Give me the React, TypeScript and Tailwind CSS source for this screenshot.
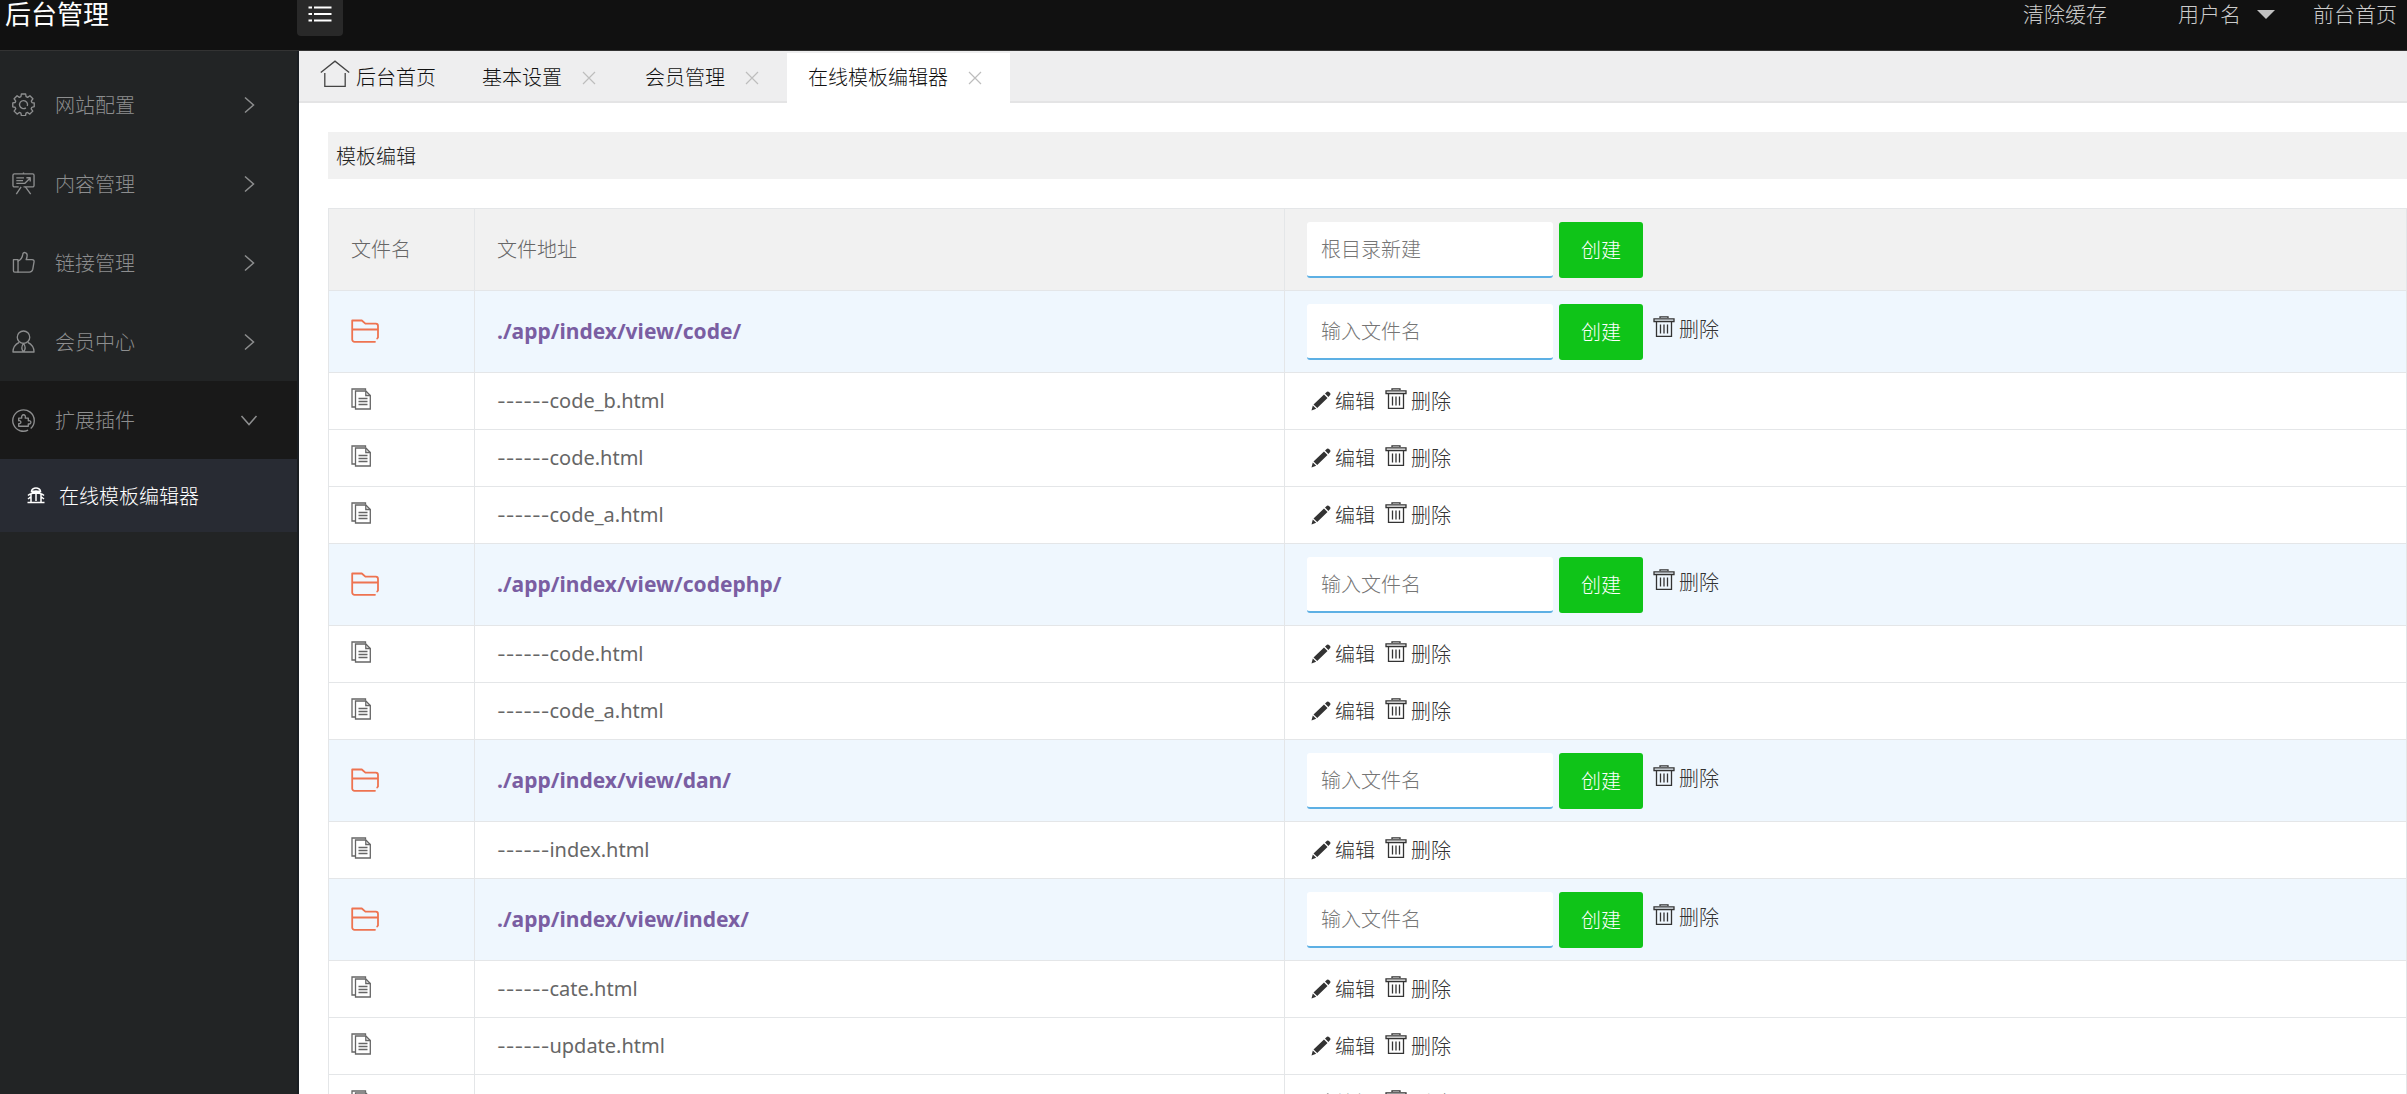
import React from "react";

type IconProps = { className?: string };

type Entry = { name: string; dir?: boolean };

const menus = [
    { title: "网站配置", icon: GearIcon },
    { title: "内容管理", icon: BoardIcon },
    { title: "链接管理", icon: ThumbIcon },
    { title: "会员中心", icon: UserIcon },
];

const tabs = ["基本设置", "会员管理", "在线模板编辑器"];

const entries: Entry[] = [
    { name: "./app/index/view/code/", dir: true },
    { name: "code_b.html" },
    { name: "code.html" },
    { name: "code_a.html" },
    { name: "./app/index/view/codephp/", dir: true },
    { name: "code.html" },
    { name: "code_a.html" },
    { name: "./app/index/view/dan/", dir: true },
    { name: "index.html" },
    { name: "./app/index/view/index/", dir: true },
    { name: "cate.html" },
    { name: "update.html" },
    { name: "index.html" },
];

function GearIcon({ className }: IconProps) {
    return (
        <svg className={className} viewBox="0 0 24 24" fill="none" stroke="currentColor" strokeWidth="1.4" strokeLinejoin="round">
            <path d="M9.8 1h4.4l.5 2.9 1.6.7 2.4-1.7 3.1 3.1-1.7 2.4.7 1.6 2.4.4v3.9l-2.5.6-.7 1.6 1.7 2.4-3.1 3.1-2.4-1.7-1.6.7-.5 2.6H9.8L9.3 21l-1.6-.7L5.3 22l-3.1-3.1 1.7-2.4-.7-1.6-2.4-.5v-4l2.5-.5.6-1.5L2.2 6l3.1-3.1 2.4 1.7 1.6-.7z" />
            <path d="M14.5 15.5a4.200 4.200 0 1 1 1.500-2" />
        </svg>
    );
}

function BoardIcon({ className }: IconProps) {
    return (
        <svg className={className} viewBox="0 0 24 24" fill="none" stroke="currentColor" strokeWidth="1.4" strokeLinejoin="round">
            <path d="M7 15.5H2.5A1.5 1.5 0 0 1 1 14V3.500A1.500 1.500 0 0 1 2.500 2h19A1.500 1.500 0 0 1 23 3.500V14a1.500 1.500 0 0 1-1.500 1.500H12M8 2h8M12 .5V2" />
            <path d="M4.500 6.200h8M4.500 9h7M4.500 11.800h9l5-5M15 6h4v4M9.500 15.500 4.500 23M14 15.500l5.500 7.500" />
        </svg>
    );
}

function ThumbIcon({ className }: IconProps) {
    return (
        <svg className={className} viewBox="0 0 24 24" fill="none" stroke="currentColor" strokeWidth="1.4" strokeLinejoin="round" strokeLinecap="round">
            <path d="M1.500 9h4.800v13H2.800a1.300 1.300 0 0 1-1.300-1.300z" />
            <path d="M6.300 10.500c3.200-1.200 4.500-3.500 5-7.200.2-2.600 4.500-2.300 4.500 1.200 0 1.800-.4 3.200-1 4.500h6.200c1.500 0 2.200 1 2 2.300L21.700 19c-.4 2-1.600 3-3.500 3H6.300" />
        </svg>
    );
}

function UserIcon({ className }: IconProps) {
    return (
        <svg className={className} viewBox="0 0 24 24" fill="none" stroke="currentColor" strokeWidth="1.4" strokeLinejoin="round">
            <circle cx="12" cy="7.500" r="6.500" />
            <path d="M7.500 13C3.500 15 1 18.500 1 23h22c0-4.500-2.500-8-6.500-10M12 14c-2.500 3.500-2.500 6 0 9 2.500-3 2.500-5.500 0-9z" />
        </svg>
    );
}

function PluginIcon({ className }: IconProps) {
    return (
        <svg className={className} viewBox="0 0 24 24" fill="none" stroke="currentColor" strokeWidth="1.4" strokeLinejoin="round">
            <path d="M19.500 20.400A11.200 11.200 0 1 0 8.500 22.700c2.800.8 5.800.6 8.300-.7" />
            <path d="M7 9.500h3.200c-1.200-4.700 5-4.700 3.600 0H17v2.800c3.600-1 3.600 4.200 0 3.200V18H7v-2.800c3 .8 3-3.800 0-2.900z" />
        </svg>
    );
}

function BugIcon({ className }: IconProps) {
    return (
        <svg className={className} viewBox="0 0 18 17" fill="none" stroke="currentColor" strokeWidth="1.5">
            <path d="M4.500 5.500V4.200C5.500 0 12.500 0 13.500 4.200v1.300M1 8.500C4.500 5 13.500 5 17 8.500M4 7v8M14 7v8M9 3.500V14M.5 15.500h17M1 12l2.500-2M17 12l-2.500-2" />
            <path d="M5 3.500h8v2.500H5z" fill="currentColor" stroke="none" />
        </svg>
    );
}

function MenuListIcon({ className }: IconProps) {
    return (
        <svg className={className} viewBox="0 0 24 16" fill="none" stroke="currentColor" strokeWidth="1.8">
            <path d="M.5 1.500H4M6 1.500h17.500M.5 8H4M6 8h17.500M.5 14.500H4M6 14.500h17.500" />
        </svg>
    );
}

function Chevron({ className }: IconProps) {
    return (
        <svg className={className} viewBox="0 0 18 18" fill="none" stroke="currentColor" strokeWidth="1.5">
            <path d="m5 1.500 8.500 7.500L5 16.500" />
        </svg>
    );
}

function HomeIcon({ className }: IconProps) {
    return (
        <svg className={className} viewBox="0 0 30 28" fill="none" stroke="currentColor" strokeWidth="1.3">
            <path d="M.8 12.500 15 1.200l14.200 11.300M4.800 13v13.300h20.400V13" />
        </svg>
    );
}

function CloseIcon({ className }: IconProps) {
    return (
        <svg className={className} viewBox="0 0 14 14" fill="none" stroke="currentColor" strokeWidth="1.2">
            <path d="m1 1 12 12M13 1 1 13" />
        </svg>
    );
}

function FolderIcon({ className }: IconProps) {
    return (
        <svg className={className} viewBox="0 0 28 24" fill="none" stroke="currentColor" strokeWidth="1.8" strokeLinejoin="round" strokeLinecap="round">
            <path d="M24 22.800H3.500A2.300 2.300 0 0 1 1.200 20.500V1.500h9.600l3.600 3.200h10.400A2.300 2.300 0 0 1 27 7v11.500l-.8 1M1.200 10.500H27" />
        </svg>
    );
}

function FileIcon({ className }: IconProps) {
    return (
        <svg className={className} viewBox="0 0 20 22" fill="none" stroke="currentColor" strokeWidth="1.3">
            <path d="M4.500 19H1V1h13.500v1.500" />
            <path d="M4.500 3h10.300l4.500 4.500V21H4.500z" />
            <path d="M14.800 3v4.500h4.500M7.500 10.500h9M7.500 13.500h9M7.500 16.500h9" />
        </svg>
    );
}

function PencilIcon({ className }: IconProps) {
    return (
        <svg className={className} viewBox="0 0 20 20" fill="currentColor">
            <path d="M14 2.500 16 .8a1.500 1.500 0 0 1 2 .2l1 1a1.500 1.500 0 0 1 .1 2L17.400 6zM13 3.500l3.500 3.500L6.200 17l-3.700-3.500zM1.800 14.600l3.400 3.200L.5 19.500z" />
        </svg>
    );
}

function TrashIcon({ className }: IconProps) {
    return (
        <svg className={className} viewBox="0 0 22 22" fill="none" stroke="currentColor" strokeWidth="1.3">
            <path d="M7 2V.8h8V2M1 5.500V2.800h20v2.700zM3.500 5.500V20.300h15V5.500M7.500 8.500v9M11 8.500v9M14.500 8.500v9" />
        </svg>
    );
}

function DeleteLink() {
    return (
        <a href="#" className="flex items-center gap-1">
            <TrashIcon className="mb-1.5 size-[22px]" />
            删除
        </a>
    );
}

function CreateForm({ placeholder }: { placeholder: string }) {
    return (
        <>
            <input
                aria-label={placeholder}
                placeholder={placeholder}
                className="h-[56px] w-[246px] rounded-[3px] border-b-2 border-[#5db0e4] bg-white px-3.5 pt-0.5 text-[20px] font-light outline-none placeholder:text-[#757575]"
            />
            <button className="ml-1.5 h-[56px] w-[84px] rounded-[3px] bg-[#0fc418] pt-0.5 text-[20px] text-white">创建</button>
        </>
    );
}

function Sidebar() {
    return (
        <nav className="w-[299px] shrink-0 border-r-2 border-[#1a1e22] bg-[#222425] pt-[14px] text-[#8d8e8f]">
            {menus.map(({ title, icon: Icon }) => (
                <a key={title} href="#" className="flex h-[79px] items-center pl-3">
                    <Icon className="size-[23px]" />
                    <span className="ml-5 flex-1 pt-0.5">{title}</span>
                    <Chevron className="mr-[39px] size-[18px]" />
                </a>
            ))}
            <a href="#" className="flex h-[78px] items-center bg-[#191919] pl-3">
                <PluginIcon className="size-[23px]" />
                <span className="ml-5 flex-1 pt-0.5">扩展插件</span>
                <Chevron className="mr-[39px] size-[18px] rotate-90" />
            </a>
            <a href="#" className="flex h-[73px] items-center gap-3.5 bg-[#282b33] pl-[27px] text-white">
                <BugIcon className="h-[17px] w-[18px]" />
                <span className="pt-0.5">在线模板编辑器</span>
            </a>
        </nav>
    );
}

function TabBar() {
    return (
        <div className="flex h-[52px] border-b-2 border-[#e4e4e5] bg-[#eeeeef] text-[#111]">
            <a href="#" className="flex w-[162px] items-center pt-1 pl-[21px]">
                <HomeIcon className="mb-2 h-[28px] w-[30px] text-[#444]" />
                <span className="ml-1.5">后台首页</span>
            </a>
            {tabs.map((tab, i) => (
                <div
                    key={tab}
                    className={`flex items-center pl-[21px] pr-7 ${i === 2 ? "-mb-0.5 mt-0.5 bg-white" : "pt-1"}`}
                >
                    <a href="#">{tab}</a>
                    <button aria-label={`关闭${tab}`} className="ml-5 text-[#bdbdbd]">
                        <CloseIcon className="size-[14px]" />
                    </button>
                </div>
            ))}
        </div>
    );
}

function FileTable() {
    return (
        <table className="mt-[29px] w-full table-fixed border-collapse text-left text-[#666] [&_td]:border [&_td]:border-[#e4e6e8] [&_td]:px-[22px] [&_th]:border [&_th]:border-[#e4e6e8] [&_th]:px-[22px]">
            <thead>
                <tr className="h-[82px] bg-[#f1f1f1]">
                    <th className="w-[146px] font-light">文件名</th>
                    <th className="w-[810px] font-light">文件地址</th>
                    <th className="font-light">
                        <div className="flex items-center">
                            <CreateForm placeholder="根目录新建" />
                        </div>
                    </th>
                </tr>
            </thead>
            <tbody>
                {entries.map((entry, i) =>
                    entry.dir ? (
                        <tr key={i} className="h-[82px] bg-[#eff7fe]">
                            <td>
                                <FolderIcon className="mb-0.5 h-[24px] w-[28px] text-[#ee7350]" />
                            </td>
                            <td>
                                <a href="#" className="text-[21px] font-bold text-[#7a5ea2]">{entry.name}</a>
                            </td>
                            <td>
                                <div className="flex items-center text-[#333]">
                                    <CreateForm placeholder="输入文件名" />
                                    <div className="mb-1 ml-2.5">
                                        <DeleteLink />
                                    </div>
                                </div>
                            </td>
                        </tr>
                    ) : (
                        <tr key={i} className="h-[57px]">
                            <td>
                                <FileIcon className="mb-1 h-[22px] w-[20px]" />
                            </td>
                            <td className="font-normal">
                                <span className="font-['Inter',sans-serif] text-[19px]">------</span>
                                {entry.name}
                            </td>
                            <td>
                                <div className="flex items-center gap-2.5 pt-0.5 pl-1 text-[#333]">
                                    <a href="#" className="flex items-center gap-1">
                                        <PencilIcon className="mb-0.5 size-[20px]" />
                                        编辑
                                    </a>
                                    <DeleteLink />
                                </div>
                            </td>
                        </tr>
                    )
                )}
            </tbody>
        </table>
    );
}

export default function App() {
    return (
        <div className="flex h-screen flex-col overflow-hidden bg-white font-['Noto_Sans','Noto_Sans_CJK_SC',sans-serif] text-[20px] leading-[30px] font-light">
            <header className="flex h-[51px] shrink-0 items-start border-b border-[#333] bg-[#111] text-[#ccc]">
                <h1 className="w-[297px] pl-[5px] text-[26px] leading-[28px] font-normal text-white">后台管理</h1>
                <button aria-label="菜单" className="flex h-9 w-[46px] justify-center rounded-b-[4px] bg-[#292929] pt-1.5 text-white">
                    <MenuListIcon className="h-[16px] w-[24px]" />
                </button>
                <div className="ml-auto flex pr-2.5 text-[21px] leading-[28px]">
                    <a href="#">清除缓存</a>
                    <button className="ml-[71px] flex items-center gap-4">
                        用户名
                        <svg className="h-[9px] w-[18px]" viewBox="0 0 18 9" fill="#c2c2c2">
                            <path d="M0 0h18L9 9z" />
                        </svg>
                    </button>
                    <a href="#" className="ml-[38px]">前台首页</a>
                </div>
            </header>
            <div className="flex min-h-0 flex-1">
                <Sidebar />
                <main className="min-w-0 flex-1 overflow-hidden">
                    <TabBar />
                    <div className="pt-[29px] pl-[29px]">
                        <h2 className="bg-[#f1f1f1] pt-2.5 pb-[7px] pl-2 text-[#222]">模板编辑</h2>
                        <FileTable />
                    </div>
                </main>
            </div>
        </div>
    );
}
